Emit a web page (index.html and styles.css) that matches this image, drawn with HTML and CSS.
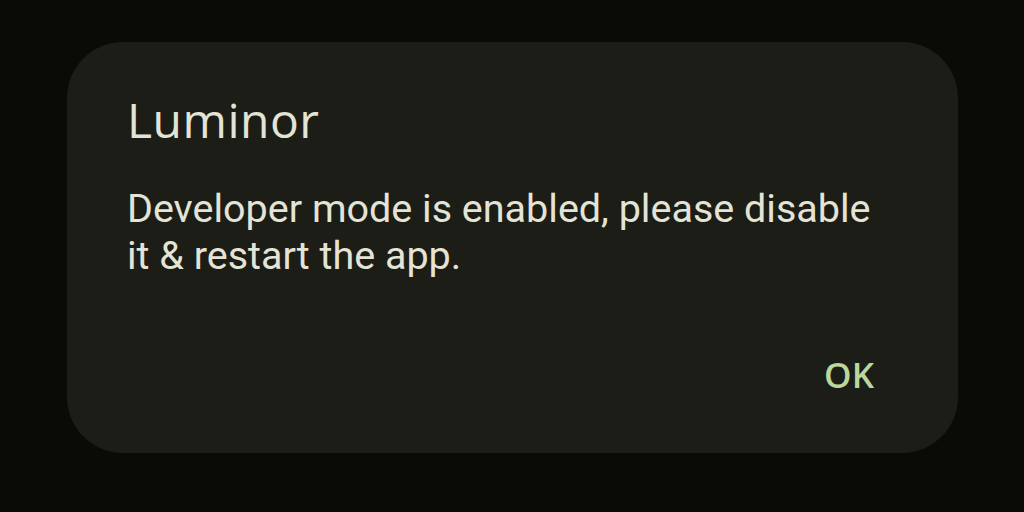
FILE: index.html
```html
<!DOCTYPE html>
<html>
<head>
<meta charset="utf-8">
<link rel="stylesheet" href="styles.css">
</head>
<body>
<div class="screen">
  <div class="dialog">
    <div class="title">Luminor</div>
    <div class="message">Developer mode is enabled, please disable it &amp; restart the app.</div>
    <div class="actions"><span class="btn">OK</span></div>
  </div>
</div>
</body>
</html>
```
FILE: styles.css
```css
html, body {
  margin: 0;
  padding: 0;
  background: #0a0b07;
  width: 1024px;
  height: 512px;
  overflow: hidden;
}
.screen {
  padding: 42px 0 0 67px;
}
.dialog {
  box-sizing: border-box;
  width: 891px;
  height: 411px;
  background: #1b1d16;
  border-radius: 56px;
  padding: 46px 84px 0 60px;
  display: flex;
  flex-direction: column;
}
.title {
  font-family: "Open Sans", sans-serif;
  font-size: 48px;
  letter-spacing: 0.5px;
  line-height: 64px;
  color: #e4e4d6;
}
.message {
  margin-top: 33px;
  font-family: Roboto, sans-serif;
  font-size: 39.5px;
  line-height: 47px;
  color: #e4e4d6;
}
.actions {
  display: flex;
  justify-content: flex-end;
  margin-top: 76px;
}
.btn {
  font-family: "Open Sans", sans-serif;
  font-weight: 600;
  font-size: 35px;
  line-height: 40px;
  color: #bcd69c;
}
```
